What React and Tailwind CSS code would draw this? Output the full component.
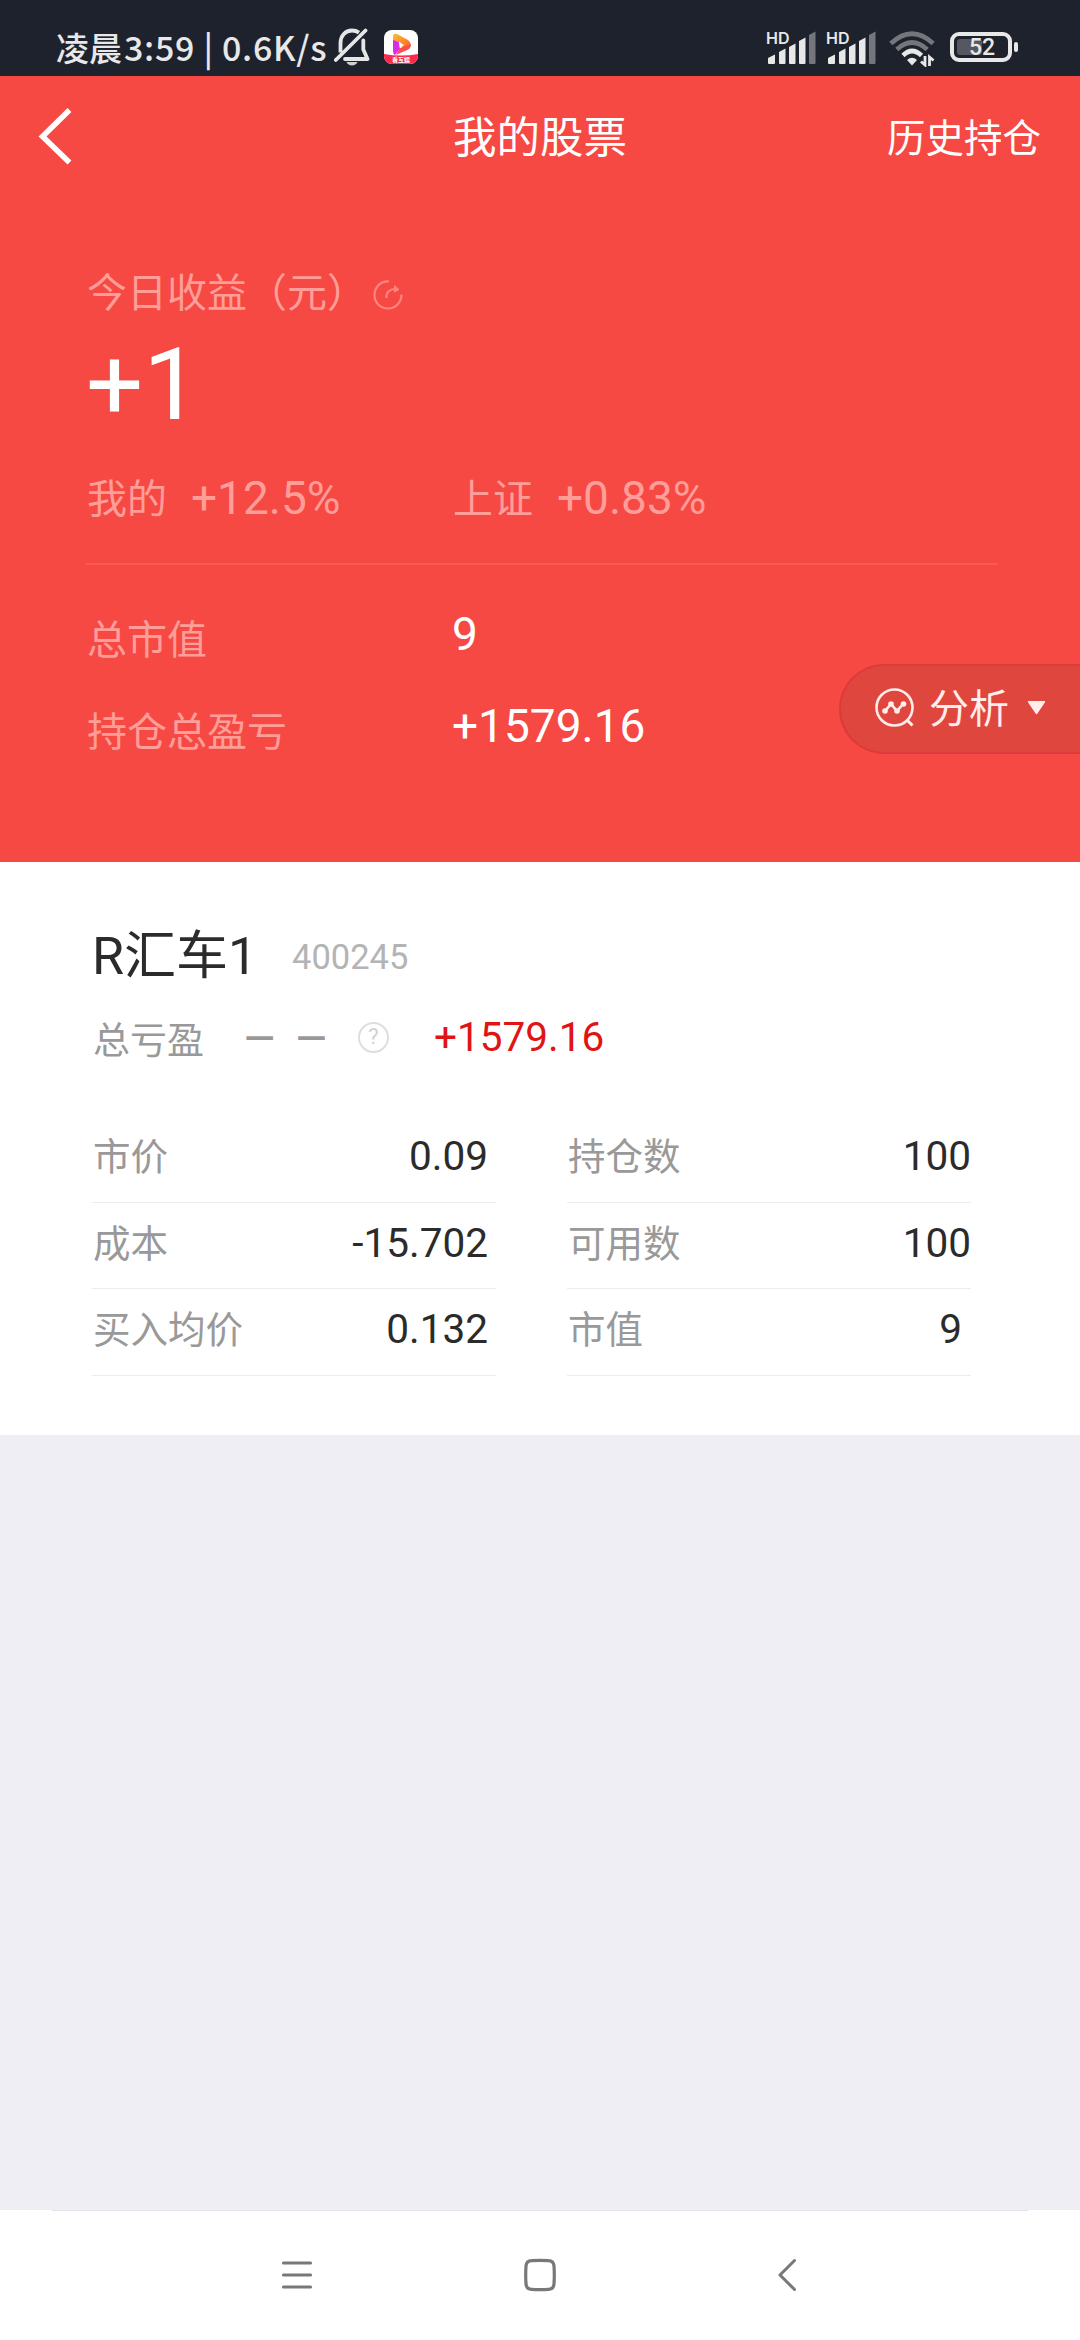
const leftRows = [
    { label: '市价', value: '0.09' },
    { label: '成本', value: '-15.702' },
    { label: '买入均价', value: '0.132' },
];

const rightRows = [
    { label: '持仓数', value: '100' },
    { label: '可用数', value: '100' },
    { label: '市值', value: '9', inset: true },
];

function MuteIcon() {
    return (
        <svg className="ml-[8px] w-[36px] h-[38px]" viewBox="0 0 36 38" fill="none" stroke="#e6e6e6" strokeWidth="3.8">
            <path d="M6.5 24.5V15C6.500 7.500 11.500 2.500 18 2.500C20.500 2.500 23 3.200 25 4.600" />
            <path d="M29.300 12.500V21.500L33.500 31H11" strokeLinejoin="round" strokeLinecap="round" />
            <path d="M1.800 32L31.500 2.500" strokeLinecap="round" />
            <path d="M12.500 34H23.500C22 38.500 14 38.500 12.500 34Z" fill="#cfcfcf" stroke="none" />
        </svg>
    );
}

function VideoAppIcon() {
    return (
        <div className="relative ml-[14px] w-[34px] h-[34px] rounded-[8px] overflow-hidden bg-white">
            <svg className="w-full h-full" viewBox="0 0 34 34">
                <defs>
                    <linearGradient id="play" x1="0" y1="0" x2="1" y2="1">
                        <stop offset="0" stopColor="#fbc02d" />
                        <stop offset="1" stopColor="#ff5a2c" />
                    </linearGradient>
                </defs>
                <path d="M0 24Q17 27 34 24V34H0Z" fill="#fb2a4d" />
                <path d="M9 7Q9 3 13 4L24 10Q29 14 25 19L20 21L16 12L9 11Z" fill="url(#play)" />
                <path d="M9 10L15 12L16 19L11 25Q9 24 9 21Z" fill="#d92be8" />
                <path d="M16 18L27 14Q27 18 23 20L12 25Z" fill="#f8504c" />
                <path d="M15 12L20 15L16 18Z" fill="#fff" />
            </svg>
            <span className="absolute inset-x-0 top-[26px] text-center text-[6px] leading-[7px] font-bold text-white">
                看互娱
            </span>
        </div>
    );
}

function Signal() {
    return (
        <div className="relative w-[60px] h-[34px]">
            <span className="absolute left-0 top-px text-[16px] leading-[12px] font-semibold font-[Inter,sans-serif]">HD</span>
            <svg className="w-[60px] h-[34px]" viewBox="0 0 60 34" fill="#e8e8e8">
                <path d="M2 32V27L9 23.500V32Q9 33 8 33H3Q2 33 2 32Z" />
                <path d="M13 32V21L19.500 17.500V32Q19.500 33 18.500 33H14Q13 33 13 32Z" />
                <path d="M23 32V16L29.500 12.500V32Q29.500 33 28.500 33H24Q23 33 23 32Z" />
                <path d="M33 32V10L39.500 6.500V32Q39.500 33 38.500 33H34Q33 33 33 32Z" />
                <path d="M43 32V4L49.500 0.500V32Q49.500 33 48.500 33H44Q43 33 43 32Z" fill="#75767b" />
            </svg>
        </div>
    );
}

function Wifi() {
    return (
        <svg className="ml-[3px] w-[46px] h-[36px]" viewBox="0 0 46 36" fill="none" strokeWidth="4.600">
            <path d="M1.800 12.500Q23 -7 44.200 12.500" stroke="#75767b" />
            <path d="M7.800 18.500Q23 4.500 38.200 18.500" stroke="#75767b" />
            <path d="M14 24.500Q23 15.500 32.500 24.500" stroke="#e8e8e8" />
            <path d="M18 29Q23 24.500 28 29L23 34.500Z" fill="#e8e8e8" stroke="none" />
            <path d="M36 25V34L32 30.500M40.500 35V26L44.500 29.500" stroke="#e8e8e8" strokeWidth="2.800" />
        </svg>
    );
}

function Battery() {
    return (
        <div className="ml-[15px] flex items-center gap-[2px]">
            <div className="relative w-[62px] h-[30px] rounded-[9px] border-4 border-[#e8e8e8]">
                <div className="absolute left-[3px] top-[3px] w-[25px] h-[16px] rounded-[3px] bg-[#555861]" />
                <span className="absolute left-[15px] top-0 text-[23px] leading-[23px] font-medium font-[Roboto,sans-serif]">52</span>
            </div>
            <div className="w-[4px] h-[10px] rounded-full bg-[#e8e8e8]" />
        </div>
    );
}

function StatusBar() {
    return (
        <div className="flex items-start h-[76px] bg-[#1e222d] text-[#e8e8e8]">
            <div className="flex items-center h-[38px] mt-[28px] ml-[56px]">
                <div className="flex w-[270px] text-[33px] leading-[38px] font-medium whitespace-nowrap">
                    <span className="-mt-px">凌晨</span>
                    <span className="ml-[2px] -mt-px text-[34px] tracking-[0.7px]">3:59 | 0.6K/s</span>
                </div>
                <MuteIcon />
                <VideoAppIcon />
            </div>
            <div className="flex items-start ml-auto mr-[62px] mt-[31px]">
                <Signal />
                <Signal />
                <Wifi />
                <div className="mt-px">
                    <Battery />
                </div>
            </div>
        </div>
    );
}

function Header() {
    return (
        <div className="grid grid-cols-3 items-center h-[121px] text-white">
            <svg className="ml-[38px] -mt-[2px] w-[36px] h-[58px]" viewBox="0 0 36 58" fill="none" stroke="currentColor" strokeWidth="5.500">
                <path d="M31.500 3L4.500 29.500L31.500 55.500" />
            </svg>
            <h1 className="-mt-[3px] text-center text-[43.500px] leading-[60px]">我的股票</h1>
            <span className="-mt-[4px] text-right pr-[39px] text-[38.500px] leading-[60px]">历史持仓</span>
        </div>
    );
}

function AnalysisButton() {
    return (
        <button className="absolute right-0 top-[588px] flex items-center w-[241px] h-[90px] pl-[34px] rounded-l-full border-2 border-r-0 border-[#dc3b3b] bg-[#df473e] text-[#ffeceb]">
            <svg className="-mt-[2px] w-[40px] h-[40px]" viewBox="0 0 40 40" fill="none" stroke="currentColor" strokeWidth="2.600">
                <circle cx="19.500" cy="19.500" r="18" />
                <path d="M32 32L37.500 37.500" strokeWidth="3" />
                <path d="M10 23L16 16L22 23L28 16" />
                <g fill="currentColor" stroke="none">
                    <circle cx="10" cy="23" r="2.800" />
                    <circle cx="16" cy="16" r="2.800" />
                    <circle cx="22" cy="23" r="2.800" />
                    <circle cx="28.500" cy="16" r="2.800" />
                </g>
            </svg>
            <span className="ml-[14px] -mt-[6px] text-[40px] leading-[56px]">分析</span>
            <svg className="ml-[18px] -mt-[3px] w-[19px] h-[14px]" viewBox="0 0 20 15" fill="currentColor">
                <path d="M1.500 0H18.500Q20 0 19 1.500L11 13.500Q10 15 9 13.500L1 1.500Q0 0 1.500 0Z" />
            </svg>
        </button>
    );
}

function Summary() {
    return (
        <section className="relative h-[786px] bg-[#f64943] text-[#ff9d99]">
            <Header />
            <div className="pl-[87px] pr-[82px] pt-[65px]">
                <div className="flex items-center h-[60px]">
                    <span className="-mt-[5px] w-[286px] text-[40px] leading-[60px] whitespace-nowrap">今日收益（元）</span>
                    <svg className="mt-[5px] w-[30px] h-[30px]" viewBox="0 0 30 30" fill="none" stroke="#ff837e" strokeWidth="2.200">
                        <path d="M16 1.500C8 0.500 1.500 7 1.500 15S7.500 28.500 15 28.500S28.500 22.500 28.500 14.500" />
                        <path d="M13.500 18C13 12 17 9 22 9" />
                        <path d="M21.500 5.500L26 9.500L21.500 12Z" fill="#ff837e" strokeWidth="1" />
                    </svg>
                </div>
                <div className="mt-[3px] h-[120px] -ml-px text-[101px] leading-[120px] text-white font-[Roboto,sans-serif]">+1</div>
                <div className="flex mt-[23px] h-[60px] text-[40px] leading-[60px]">
                    <div className="flex w-[366px]">
                        <span className="w-[104px] -mt-[2px]">我的</span>
                        <span className="text-[46px] font-[Roboto,sans-serif]">+12.5%</span>
                    </div>
                    <span className="w-[104px] -mt-[2px]">上证</span>
                    <span className="text-[46px] font-[Roboto,sans-serif]">+0.83%</span>
                </div>
                <div className="mt-[35px] -ml-px h-[2px] bg-[#fb5a54]" />
                <div className="flex mt-[39px] h-[92px] leading-[60px]">
                    <span className="w-[365px] pt-[3px] text-[40px]">总市值</span>
                    <span className="text-[46px] text-white font-[Roboto,sans-serif]">9</span>
                </div>
                <div className="flex h-[92px] leading-[60px]">
                    <span className="w-[365px] pt-[3px] text-[40px]">持仓总盈亏</span>
                    <span className="text-[46px] text-white font-[Roboto,sans-serif]">+1579.16</span>
                </div>
            </div>
            <AnalysisButton />
        </section>
    );
}

function Column({ rows, className }) {
    return (
        <div className={`w-[404px] ${className}`}>
            {rows.map((row) => (
                <div key={row.label} className="flex justify-between h-[86.600px] pt-[15px] pl-[1px] border-b border-[#ececec] leading-[50px]">
                    <span className="-mt-[2px] text-[37.500px] text-[#999]">{row.label}</span>
                    <span className={`text-[40.500px] text-[#2b2b2b] font-[Roboto,sans-serif] ${row.inset ? 'mr-[9px]' : ''}`}>
                        {row.value}
                    </span>
                </div>
            ))}
        </div>
    );
}

function StockCard() {
    return (
        <section className="h-[573px] px-[92px] pt-[60px] bg-white">
            <div className="flex items-center h-[70px]">
                <span className="w-[200px] text-[52px] leading-[70px] text-[#2b2b2b] whitespace-nowrap font-[Roboto,'Noto_Sans_CJK_SC',sans-serif]">
                    R汇车1
                </span>
                <span className="text-[34.500px] leading-[70px] text-[#b4b4b4] font-[Roboto,sans-serif]">400245</span>
            </div>
            <div className="flex items-center mt-[15px] h-[60px] leading-[60px]">
                <span className="w-[152px] pl-[1px] mt-px text-[37px] text-[#999]">总亏盈</span>
                <span className="w-[114px] mt-[4px] text-[40px] font-medium text-[#999] font-[Roboto,sans-serif] [word-spacing:11px] whitespace-nowrap">— —</span>
                <span className="flex items-center justify-center w-[31px] h-[31px] rounded-full border-2 border-[#dedede] text-[22px] leading-[26px] text-[#d2d2d2] font-[Roboto,sans-serif]">
                    ?
                </span>
                <span className="ml-[45px] text-[40.500px] text-[#e11414] font-[Roboto,sans-serif]">+1579.16</span>
            </div>
            <div className="flex mt-[49px] gap-[71px]">
                <Column rows={leftRows} className="[&>div]:pr-[8px]" />
                <Column rows={rightRows} />
            </div>
        </section>
    );
}

function NavBar() {
    return (
        <nav className="h-[130px] bg-white">
            <div className="mx-[52px] h-px bg-[#e4e4e6]" />
            <div className="flex items-center h-[128px] pl-[280px] text-[#787878]">
                <svg className="w-[34px] h-[34px]" viewBox="0 0 34 34" fill="none" stroke="currentColor" strokeWidth="3.200" strokeLinecap="round">
                    <path d="M3.500 5H30.500M3.500 17H30.500M3.500 29H30.500" />
                </svg>
                <svg className="ml-[209px] w-[34px] h-[34px]" viewBox="0 0 34 34" fill="none" stroke="currentColor" strokeWidth="3.200">
                    <path d="M8.500 2.600Q17 2 25.500 2.600Q30.500 2.800 31 8Q31.600 17 31 26Q30.500 31.200 25.500 31.400Q17 32 8.500 31.400Q3.500 31.200 3 26Q2.400 17 3 8Q3.500 2.800 8.500 2.600Z" />
                </svg>
                <svg className="ml-[219px] w-[22px] h-[34px]" viewBox="0 0 22 34" fill="none" stroke="currentColor" strokeWidth="3" strokeLinecap="round" strokeLinejoin="round">
                    <path d="M18.500 2.500L4 17L18.500 31.500" />
                </svg>
            </div>
        </nav>
    );
}

export default function App() {
    return (
        <div className="flex flex-col w-[1080px] h-[2340px] overflow-hidden bg-[#efeef4] font-['Noto_Sans_CJK_SC',sans-serif]">
            <StatusBar />
            <Summary />
            <StockCard />
            <div className="flex-1" />
            <NavBar />
        </div>
    );
}
